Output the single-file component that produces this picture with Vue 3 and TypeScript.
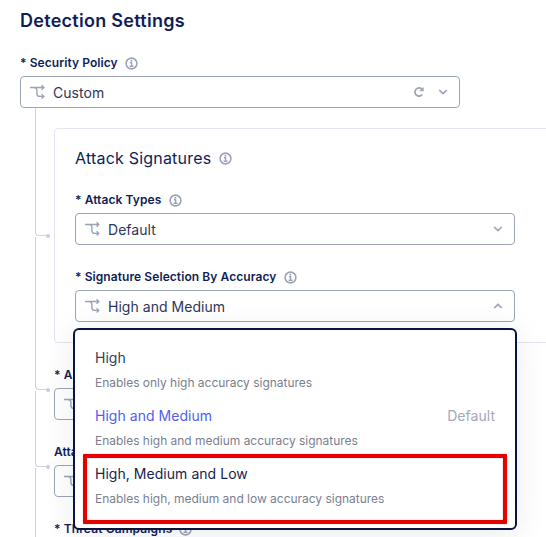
<script setup lang="ts">
import { h, type FunctionalComponent } from 'vue'

interface Option {
  label: string
  hint: string
  selected?: boolean
  marked?: boolean
}

const options: Option[] = [
  { label: 'High', hint: 'Enables only high accuracy signatures' },
  { label: 'High and Medium', hint: 'Enables high and medium accuracy signatures', selected: true },
  { label: 'High, Medium and Low', hint: 'Enables high, medium and low accuracy signatures', marked: true },
]

const stroke = { fill: 'none', stroke: 'currentColor' }

const InfoIcon: FunctionalComponent = () =>
  h('svg', { width: 13, height: 13, viewBox: '0 0 13 13', ...stroke }, [
    h('circle', { cx: 6.5, cy: 6.5, r: 5.4, 'stroke-width': 1.6 }),
    h('path', { d: 'M5 5.8h1.6v3.3M4.6 9.2h3.9', 'stroke-width': 1.4 }),
    h('circle', { cx: 6.4, cy: 3.7, r: 1, fill: 'currentColor', stroke: 'none' }),
  ])

const BranchIcon: FunctionalComponent = () =>
  h('svg', { width: 16, height: 16, viewBox: '0 0 16 16', ...stroke, 'stroke-width': 1.4 }, [
    h('path', { d: 'M0 3.5h14M11.6 1.3 13.8 3.5 11.6 5.7M3.6 3.5Q6.9 3.5 6.9 6.8V9.4Q6.9 12.4 9.9 12.4H14M11.6 10.2 13.8 12.4 11.6 14.6' }),
  ])

const ChevronIcon: FunctionalComponent<{ up?: boolean }> = (props) =>
  h('svg', { width: 10, height: 8, viewBox: '0 0 10 8', ...stroke, 'stroke-width': 1.7 }, [
    h('path', { d: props.up ? 'M1.2 6 5 2.4 8.8 6' : 'M1.2 2 5 5.6 8.8 2' }),
  ])
ChevronIcon.props = { up: Boolean }

const ReloadIcon: FunctionalComponent = () =>
  h('svg', { width: 12, height: 12, viewBox: '0 0 12 12', ...stroke, 'stroke-width': 1.7 }, [
    h('path', { d: 'M9.3 8.6A4.1 4.1 0 1 1 9 3.2' }),
    h('path', { d: 'M10.6.9V5.2H6.3z', fill: 'currentColor', stroke: 'none' }),
  ])
</script>

<template>
  <main class="page">
    <h1 class="title">Detection Settings</h1>
    <div class="label"><span>* Security Policy</span><InfoIcon /></div>
    <div class="select">
      <BranchIcon /><span class="value">Custom</span><ReloadIcon class="reload" /><ChevronIcon />
    </div>

    <div class="tree">
      <div class="rail">
        <i class="seg seg-card"></i>
        <i class="seg seg-second"></i>
        <i class="seg seg-third"></i>
        <i class="seg seg-rest"></i>
      </div>
      <div class="branches">
        <section class="card">
          <h2 class="subtitle"><span>Attack Signatures</span><InfoIcon /></h2>
          <div class="label"><span>* Attack Types</span><InfoIcon /></div>
          <div class="select">
            <BranchIcon /><span class="value">Default</span><ChevronIcon />
          </div>
          <div class="label spaced"><span>* Signature Selection By Accuracy</span><InfoIcon /></div>
          <div class="select anchor">
            <BranchIcon /><span class="value">High and Medium</span><ChevronIcon up />
            <ul class="menu">
              <li v-for="o in options" :key="o.label" class="option" :class="{ selected: o.selected, marked: o.marked }">
                <div class="row">
                  <span class="name">{{ o.label }}</span>
                  <span v-if="o.selected" class="default">Default</span>
                </div>
                <div class="hint">{{ o.hint }}</div>
              </li>
            </ul>
          </div>
        </section>
        <div class="label spaced"><span>* A</span></div>
        <div class="select"><BranchIcon /></div>
        <div class="label spaced"><span>Atta</span></div>
        <div class="select"><BranchIcon /></div>
        <div class="label spaced last"><span>* Threat Campaigns</span><InfoIcon /></div>
      </div>
    </div>
  </main>
</template>

<style>
body {
  background: #fff;
  overflow: hidden;
}
</style>

<style scoped>
.page {
  box-sizing: border-box;
  width: 546px;
  height: 537px;
  overflow: hidden;
  padding: 9px 0 0 20px;
  font-family: Inter, sans-serif;
  color: #0f1e57;
}
svg {
  flex: none;
  color: #9ba3b9;
}
.title {
  margin: 0 0 22px;
  font-size: 18px;
  line-height: 24px;
  font-weight: 600;
  letter-spacing: 0.28px;
}
.label {
  display: flex;
  align-items: center;
  gap: 8px;
  height: 16px;
  margin-bottom: 5px;
  font-size: 12px;
  font-weight: 600;
  line-height: 16px;
  letter-spacing: 0.08px;
  white-space: nowrap;
}
.label svg {
  margin-left: -1px;
}
.card .label svg {
  margin-left: 0;
}
.label.spaced {
  margin-top: 24px;
}
.label.last {
  letter-spacing: 0.12px;
}
.select {
  box-sizing: border-box;
  display: flex;
  align-items: center;
  width: 440px;
  height: 32px;
  padding: 0 11px 0 9px;
  border: 1px solid #9ba5b9;
  border-radius: 4px;
}
.value {
  flex: 1;
  margin-left: 7px;
  padding-top: 2px;
  font-size: 14px;
  line-height: 20px;
  font-weight: 370;
  letter-spacing: 0.04px;
  color: #2c3758;
}
.reload {
  margin-right: 13px;
}
.tree {
  display: flex;
  padding-left: 15px;
}
.rail {
  display: flex;
  flex-direction: column;
  width: 19px;
  flex: none;
}
.seg {
  box-sizing: border-box;
  display: flex;
  align-items: flex-end;
  width: 11px;
  border: solid #cdd1e1;
  border-width: 0 0 1px 1px;
  border-bottom-left-radius: 4px;
}
.seg::after {
  content: '';
  flex: none;
  width: 4px;
  height: 4px;
  margin: 0 0 -3px 10px;
  border-radius: 50%;
  background: #c8cddf;
}
.seg-card { height: 128px; }
.seg-second { height: 153px; margin-top: 1px; }
.seg-third { height: 76px; margin-top: 1px; }
.seg-rest { height: 76px; margin-top: 1px; }
.branches {
  flex: 1;
  padding-top: 20px;
}
.card {
  box-sizing: border-box;
  width: 520px;
  height: 215px;
  padding: 18px 20px 0;
  border: 1px solid #e3e4f1;
  border-radius: 4px;
}
.subtitle {
  display: flex;
  align-items: center;
  gap: 8px;
  margin: 0 0 23px;
  font-size: 16px;
  line-height: 22px;
  font-weight: 400;
  letter-spacing: 0.2px;
}
.anchor {
  position: relative;
}
.menu {
  position: absolute;
  top: 37px;
  left: -3px;
  z-index: 2;
  box-sizing: border-box;
  width: 444px;
  height: 202px;
  margin: 0;
  padding: 18px 20px;
  list-style: none;
  background: #fff;
  border: 2px solid #0a1440;
  border-radius: 6px;
  box-shadow: 0 4px 32px rgba(20, 30, 60, 0.09);
}
.option {
  position: relative;
  height: 58px;
}
.row {
  display: flex;
  justify-content: space-between;
  font-size: 14px;
  line-height: 20px;
  font-weight: 370;
  letter-spacing: 0.04px;
  color: #343e59;
}
.selected .name {
  color: #5360eb;
}
.marked .name {
  color: #18234b;
}
.default {
  font-weight: 400;
  color: #a3a8bb;
}
.hint {
  margin-top: 7px;
  font-size: 12px;
  line-height: 16px;
  letter-spacing: -0.02px;
  color: #79808f;
}
.marked::after {
  content: '';
  position: absolute;
  top: -10px;
  left: -12px;
  box-sizing: border-box;
  width: 424px;
  height: 70px;
  border: 4px solid #e60000;
  border-radius: 1px;
  box-shadow: 0 0 1px #777, inset 0 0 1px #777;
}
</style>
